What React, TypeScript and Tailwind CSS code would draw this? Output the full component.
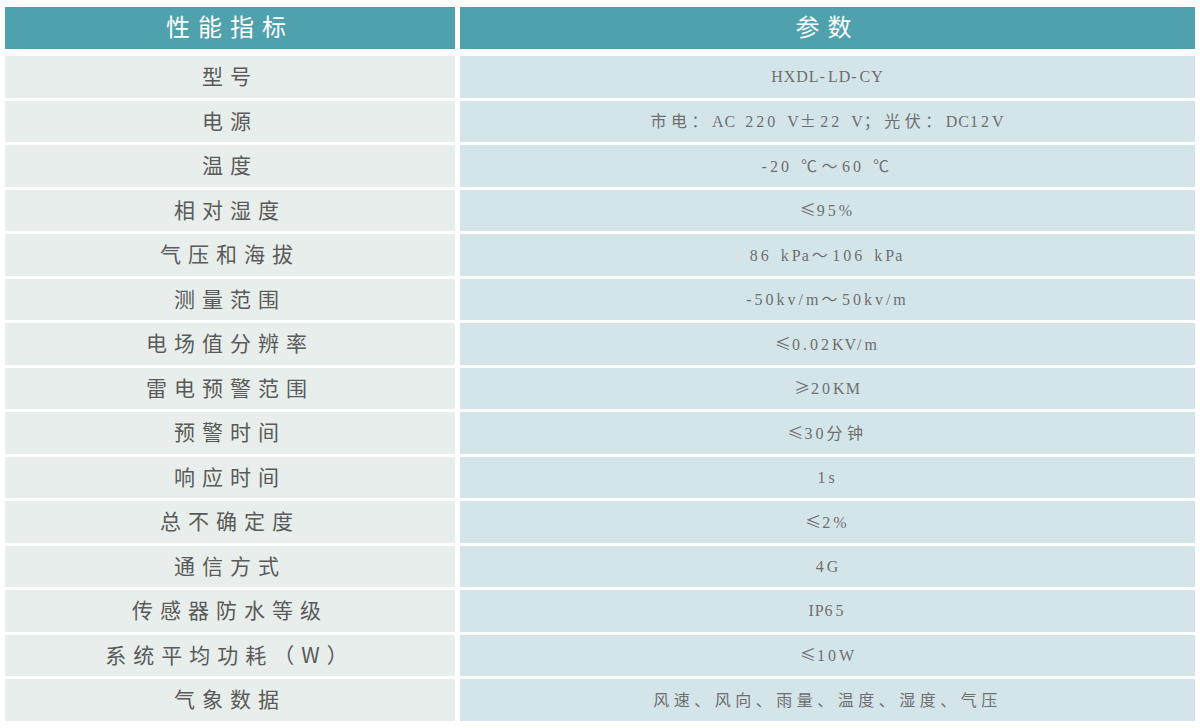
import React from "react";

const rows: [string, string][] = [
  ["型号", "HXDL-LD-CY"],
  ["电源", "市电：AC 220 V±22 V；光伏：DC12V"],
  ["温度", "-20 ℃～60 ℃"],
  ["相对湿度", "≤95%"],
  ["气压和海拔", "86 kPa～106 kPa"],
  ["测量范围", "-50kv/m～50kv/m"],
  ["电场值分辨率", "≤0.02KV/m"],
  ["雷电预警范围", "≥20KM"],
  ["预警时间", "≤30分钟"],
  ["响应时间", "1s"],
  ["总不确定度", "≤2%"],
  ["通信方式", "4G"],
  ["传感器防水等级", "IP65"],
  ["系统平均功耗（W）", "≤10W"],
  ["气象数据", "风速、风向、雨量、温度、湿度、气压"],
];

type Kind = "cjk" | "cmp" | "upper" | "space" | "other";

const runClass: Record<Kind, string> = {
  cjk: "font-['Noto_Sans_CJK_SC',sans-serif] tracking-[4.5px]",
  cmp: "font-['Noto_Sans_CJK_SC',sans-serif] tracking-[1px]",
  upper: "font-['Liberation_Serif','Noto_Sans_CJK_SC',serif] tracking-[1px]",
  space: "font-['Liberation_Serif','Noto_Sans_CJK_SC',serif] tracking-[5px]",
  other: "font-['Liberation_Serif','Noto_Sans_CJK_SC',serif] tracking-[3px]",
};

function kindOf(ch: string): Kind {
  if (ch === "≤" || ch === "≥") return "cmp";
  if (ch === " ") return "space";
  if (/[\u3000-\u9fff\uff00-\uffef～℃±]/.test(ch)) return "cjk";
  if (/[A-Z]/.test(ch)) return "upper";
  return "other";
}

function Value({ text }: { text: string }) {
  const runs: { kind: Kind; text: string }[] = [];
  for (const ch of Array.from(text)) {
    const k = kindOf(ch);
    const last = runs[runs.length - 1];
    if (last && last.kind === k) last.text += ch;
    else runs.push({ kind: k, text: ch });
  }
  return (
    <span className="whitespace-pre">
      {runs.map((r, i) => (
        <span key={i} className={runClass[r.kind]}>
          {r.text}
        </span>
      ))}
    </span>
  );
}

export default function App() {
  return (
    <div className="w-[1200px] h-[728px] bg-white pl-[5px] pt-[7px]">
      <div className="w-[1190px] flex flex-col">
        <div className="flex gap-[5px] h-[42px] font-['Noto_Sans_CJK_SC',sans-serif] text-white text-[24px] tracking-[8px]">
          <div className="w-[450px] bg-[#4fa1ad] flex items-center justify-center pb-1">
            性能指标
          </div>
          <div className="flex-1 bg-[#4fa1ad] flex items-center justify-center pb-1">
            参数
          </div>
        </div>
        <div className="mt-[7px] flex flex-col gap-[3px]">
          {rows.map(([k, v]) => (
            <div key={k} className="flex gap-[5px] h-[41.5px]">
              <div className="w-[450px] bg-[#e8eeeb] text-[#5a5a5a] text-[21px] tracking-[7px] font-['Noto_Sans_CJK_SC',sans-serif] flex items-center justify-center pb-0.5">
                {k}
              </div>
              <div className="flex-1 bg-[#d4e5ea] text-[#6e6e6e] text-base flex items-center justify-center">
                <Value text={v} />
              </div>
            </div>
          ))}
        </div>
      </div>
    </div>
  );
}
